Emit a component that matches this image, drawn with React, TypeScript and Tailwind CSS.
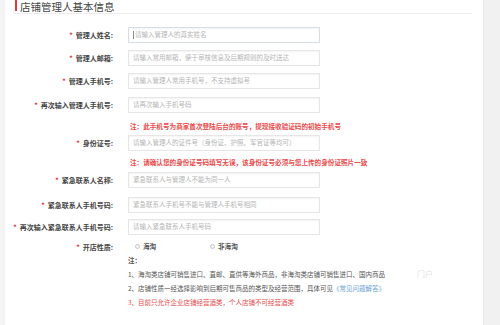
import React from "react";

const font = { fontFamily: '"Noto Sans CJK SC", "Noto Sans", sans-serif' };

type Field = { label: string; placeholder: string; mt: string; focus?: boolean };

function Label({ text }: { text: string }) {
  return (
    <div className="w-[108px] shrink-0 text-right text-[7px] leading-[16px] font-bold text-[#444] whitespace-nowrap">
      <span className="text-[#e4393c] mr-[3px]">*</span>
      {text}
    </div>
  );
}

function InputRow({ field }: { field: Field }) {
  return (
    <div className={`flex items-center gap-[15px] ${field.mt}`}>
      <Label text={field.label} />
      <div
        className={`w-[192px] h-[16px] border ${field.focus ? "border-[#d6dde6]" : "border-[#e6e6e6]"} bg-white shadow-[inset_0_1px_2px_rgba(0,0,0,0.05)] flex items-center pl-[4px] text-[6.5px] text-[#b5b5b5] whitespace-nowrap overflow-hidden`}
      >
        {field.focus && <span className="w-px h-[8px] bg-[#888] mr-[1px]" />}
        {field.placeholder}
      </div>
    </div>
  );
}

function Note({ text, mt }: { text: string; mt: string }) {
  return (
    <div className={`flex gap-[15px] ${mt}`}>
      <div className="w-[108px] shrink-0" />
      <div className="h-[14px] leading-[14px] pl-[2px] text-[6.6px] font-bold text-[#ea4a4a] whitespace-nowrap">{text}</div>
    </div>
  );
}

function Radio({ label }: { label: string }) {
  return (
    <div className="flex items-center gap-[3px]">
      <span className="w-[5px] h-[5px] rounded-full border border-[#c8c8c8] bg-[#f3f3f3]" />
      <span className="text-[6.6px] font-bold text-[#555]">{label}</span>
    </div>
  );
}

export default function App() {
  const top: Field[] = [
    { label: "管理人姓名:", placeholder: "请输入管理人的真实姓名", mt: "mt-[13px]", focus: true },
    { label: "管理人邮箱:", placeholder: "请输入常用邮箱，便于审核信息及后期规则的及时送达", mt: "mt-[7px]" },
    { label: "管理人手机号:", placeholder: "请输入管理人常用手机号，不支持虚拟号", mt: "mt-[7px]" },
    { label: "再次输入管理人手机号:", placeholder: "请再次输入手机号码", mt: "mt-[8px]" },
  ];
  const contacts: Field[] = [
    { label: "紧急联系人名称:", placeholder: "紧急联系人与管理人不能为同一人", mt: "mt-[3px]" },
    { label: "紧急联系人手机号码:", placeholder: "紧急联系人手机号不能与管理人手机号相同", mt: "mt-[9px]" },
    { label: "再次输入紧急联系人手机号码:", placeholder: "请输入紧急联系人手机号码", mt: "mt-[6px]" },
  ];

  return (
    <div className="w-[500px] h-[325px] bg-[#f4f4f4] flex overflow-hidden" style={font}>
      <div className="w-[478px] ml-[5px] bg-white flex flex-col">
        {/* title */}
        <div className="mx-[10px] mr-[11px] h-[14px] border-b border-[#ececec] flex items-start">
          <span className="w-[2px] h-[11px] bg-[#e4393c] mr-[3px] shrink-0" />
          <span className="text-[10.5px] leading-[12px] mt-[1px] text-[#444]">店铺管理人基本信息</span>
        </div>

        {top.map((f) => (
          <InputRow key={f.label} field={f} />
        ))}
        <Note mt="mt-[6px]" text="注：此手机号为商家首次登陆后台的账号，提现接收验证码的初始手机号" />
        <InputRow field={{ label: "身份证号:", placeholder: "请输入管理人的证件号（身份证、护照、军官证等均可）", mt: "mt-[2px]" }} />
        <Note mt="mt-[4px]" text="注：请确认您的身份证号码填写无误，该身份证号必须与您上传的身份证照片一致" />
        {contacts.map((f) => (
          <InputRow key={f.label} field={f} />
        ))}

        <div className="flex items-center gap-[15px] mt-[5px] h-[14px]">
          <Label text="开店性质:" />
          <div className="flex items-center pl-[7px]">
            <div className="w-[75px]">
              <Radio label="海淘" />
            </div>
            <Radio label="非海淘" />
          </div>
        </div>

        <div className="flex gap-[15px]">
          <div className="w-[108px] shrink-0" />
          <div className="flex flex-col text-[6.5px] text-[#555] whitespace-nowrap">
            <div className="h-[13px] leading-[13px] font-bold">注：</div>
            <div className="h-[14px] leading-[14px] flex">
              1、海淘类店铺可销售进口、直邮、直供等海外商品，非海淘类店铺可销售进口、国内商品
              <span className="ml-[32px] text-[#e2e2e2] text-[8px]">门户</span>
            </div>
            <div className="h-[14px] leading-[14px]">
              2、店铺性质一经选择影响到后期可售商品的类型及经营范围，具体可见
              <span className="text-[#6a9fd4]">《常见问题解答》</span>
            </div>
            <div className="h-[14px] leading-[14px] text-[#ea4a4a]">3、目前只允许企业店铺经营酒类，个人店铺不可经营酒类</div>
          </div>
        </div>
      </div>
      <div className="flex-1 bg-[#f1f1f1] border-l border-[#e9e9e9]" />
    </div>
  );
}
